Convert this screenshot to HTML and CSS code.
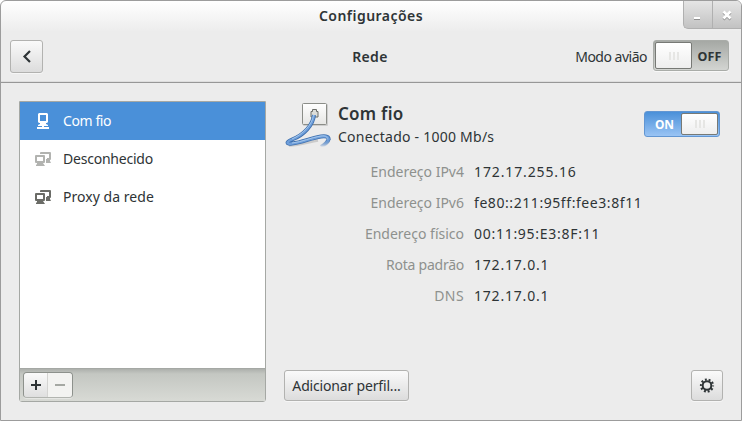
FILE: index.html
```html
<!DOCTYPE html>
<html lang="pt-BR">
<head>
<meta charset="utf-8">
<title>Configurações</title>
<link rel="stylesheet" href="styles.css">
</head>
<body>
<div class="window">
  <header class="titlebar">
    <h1 class="title">Configurações</h1>
    <div class="controls">
      <button class="control" aria-label="Minimizar"><svg width="28" height="27"><path d="M10 18h6" stroke="#8e8e8e" stroke-width="2"/><path d="M10 17h6" stroke="#fff" stroke-width="2"/></svg></button>
      <button class="control" aria-label="Fechar"><svg width="28" height="27"><path d="M10.500 11.500l7 7m0-7l-7 7" stroke="#8e8e8e" stroke-width="2.600"/><path d="M10.500 10.500l7 7m0-7l-7 7" stroke="#fff" stroke-width="2.600"/></svg></button>
    </div>
  </header>
  <div class="toolbar">
    <button class="button back" aria-label="Voltar"><svg width="31" height="31"><path d="M19 10l-5.500 5.500L19 21" fill="none" stroke="#2e3436" stroke-width="2.200"/></svg></button>
    <h2 class="page">Rede</h2>
    <div class="airplane"><span class="t-airplane">Modo avião</span>
      <div class="switch off"><i class="knob"><b></b><b></b><b></b></i><span class="state">OFF</span></div>
    </div>
  </div>
  <main class="content">
    <section class="sidebar">
      <ul class="devices">
        <li class="device selected"><svg width="16" height="16"><path fill="#fff" fill-rule="evenodd" d="M4 0h8l1 1v8l-1 1h-1v1l2 1v1H9v1h5v2H2v-2h5v-1H3v-1l2-1v-1H4L3 9V1zM5 2v6h6V2z"/></svg><span class="t-wired">Com fio</span></li>
        <li class="device"><svg width="17" height="16" class="dim"><use href="#proxy"/></svg><span class="t-unknown">Desconhecido</span></li>
        <li class="device"><svg width="17" height="16" class="dark"><g id="proxy"><path fill="none" stroke="currentColor" stroke-width="2" stroke-linejoin="round" d="M6 3V2h9v6h-3"/><path fill="currentColor" d="M11 8h4v2l1 2h-5z"/><path fill="none" stroke="currentColor" stroke-width="2" stroke-linejoin="round" d="M1 5h8v6H1z"/><path fill="currentColor" d="M2 11h6v1l2 3H1v-1l1-1z"/></g></svg><span class="t-proxy">Proxy da rede</span></li>
      </ul>
      <div class="actions">
        <div class="group">
          <button class="add" aria-label="Adicionar"><svg width="24" height="24"><path d="M7 12h10M12 7v10" stroke="#2e3436" stroke-width="2"/></svg></button>
          <button class="remove" aria-label="Remover"><svg width="24" height="24"><path d="M7 12h10" stroke="#a5a8a3" stroke-width="2"/></svg></button>
        </div>
      </div>
    </section>
    <section class="details">
      <div class="summary">
        <svg class="jack" width="48" height="48" viewBox="0 0 48 48">
          <defs>
            <linearGradient id="plate" x2="0" y2="1"><stop stop-color="#fff"/><stop offset="1" stop-color="#e6e6e4"/></linearGradient>
            <linearGradient id="edge" gradientUnits="userSpaceOnUse" x1="0" y1="39" x2="0" y2="46"><stop stop-color="#3f70ae"/><stop offset="1" stop-color="#3f70ae" stop-opacity="0"/></linearGradient>
            <linearGradient id="core" gradientUnits="userSpaceOnUse" x1="0" y1="39" x2="0" y2="46"><stop stop-color="#6f9fdb"/><stop offset="1" stop-color="#6f9fdb" stop-opacity="0"/></linearGradient>
          </defs>
          <rect x="19" y="3" width="25" height="22" rx="1" fill="#bbb" opacity=".6"/>
          <rect x="18.500" y="2.500" width="24" height="21" rx="1" fill="url(#plate)" stroke="#8b8d88"/>
          <path d="M27 16v-5.500h1.500v-2h4v2H34V16z" fill="#dcddd9" stroke="#6b6d69"/>
          <path d="M5 44.500c10 0 18-3 29-5" fill="none" stroke="#aaa" stroke-width="2.500" opacity=".5"/>
          <g fill="none" stroke-linejoin="round">
            <path d="M44.600 38C44.300 40.500 41 43.500 37 46" stroke="url(#edge)" stroke-width="4"/>
            <path d="M30 14C29 24 20 34 8 38.500C2 41 2 43.500 8 42.500C18 41.500 27 37 37 35.500C42.500 34.700 45 36 44.500 38.500" stroke="#3f70ae" stroke-width="4"/>
            <path d="M44.600 38C44.300 40.500 41 43.500 37 46" stroke="url(#core)" stroke-width="2.400"/>
            <path d="M30 14C29 24 20 34 8 38.500C2 41 2 43.500 8 42.500C18 41.500 27 37 37 35.500C42.500 34.700 45 36 44.500 38.600" stroke="#6f9fdb" stroke-width="2.400"/>
            <path d="M29.500 14C28 24 19 33 8 38M8 42C18 41 27 36.500 37 35C42 34.500 44 36 43 38.500" stroke="#b3d0ef" stroke-width=".8"/>
          </g>
        </svg>
        <div class="name"><h3 class="t-name">Com fio</h3><p class="t-status">Conectado - 1000 Mb/s</p></div>
        <div class="switch on"><span class="state">ON</span><i class="knob"><b></b><b></b><b></b></i></div>
      </div>
      <dl class="facts">
        <dt>Endereço IPv4</dt><dd class="v1">172.17.255.16</dd>
        <dt>Endereço IPv6</dt><dd class="v2">fe80::211:95ff:fee3:8f11</dd>
        <dt>Endereço físico</dt><dd class="v3">00:11:95:E3:8F:11</dd>
        <dt class="f4">Rota padrão</dt><dd class="v4">172.17.0.1</dd>
        <dt class="f5">DNS</dt><dd class="v4">172.17.0.1</dd>
      </dl>
      <footer class="footer">
        <button class="button profile"><span class="t-profile">Adicionar perfil...</span></button>
        <button class="button gear" aria-label="Opções"><svg width="30" height="29" viewBox="-15 -14.500 30 29"><circle r="4.300" fill="none" stroke="#2e3436" stroke-width="2"/><circle r="6" fill="none" stroke="#2e3436" stroke-width="2.200" stroke-dasharray="1.900 1.870" stroke-dashoffset=".95"/></svg></button>
      </footer>
    </section>
  </main>
</div>
</body>
</html>
```
FILE: styles.css
```css
* { box-sizing: border-box; }
body { margin: 0; background: #fff; font: 14px/20px "Noto Sans", "Open Sans", sans-serif; color: #2e3436; }
h1, h2, h3, p, ul, dl, dd { margin: 0; padding: 0; }
button { padding: 0; font: inherit; color: inherit; }
svg { display: block; flex: none; }
span, h1, h2, h3, p, dt, dd { white-space: nowrap; }
.window { width: 742px; height: 421px; border: 1px solid #9c9c9c; border-radius: 6px 6px 0 0; background: #ececec linear-gradient(#fff, #ececec) no-repeat 0 0 / 100% 31px; overflow: hidden; display: flex; flex-direction: column; }
.titlebar { height: 30px; display: grid; grid-template-columns: 1fr auto 1fr; }
.title, .page { grid-column: 2; font-size: 14px; font-weight: 600; line-height: 30px; }
.title { letter-spacing: .46px; }
.controls { grid-column: 3; justify-self: end; display: flex; height: 28px; border: 1px solid #b0b0b0; border-top: 0; border-right: 0; border-bottom-left-radius: 5px; background: linear-gradient(#e5e5e5, #c2c2c2); overflow: hidden; }
.control { width: 28px; border: 0; background: none; }
.control + .control { width: 29px; border-left: 1px solid #b0b0b0; }
.toolbar { height: 52px; border-bottom: 1px solid #979797; box-shadow: inset 0 -1px #dedede; display: grid; grid-template-columns: 1fr auto 1fr; align-items: start; padding: 9px 12px 0 9px; }
.button { border: 1px solid #b2b2b0; border-radius: 3px; background: linear-gradient(#fafafa, #dcdcdc); box-shadow: 0 1px #f6f6f6; }
.back { width: 33px; height: 33px; }
.page { line-height: 34px; letter-spacing: .3px; padding-left: 1px; }
.airplane { grid-column: 3; justify-self: end; display: flex; align-items: center; gap: 6px; }
.t-airplane { letter-spacing: -.5px; padding-top: 2px; }
.switch { display: flex; align-items: center; border: 1px solid #a9aca8; border-radius: 3px; width: 76px; padding: 1px; }
.off { height: 31px; background: linear-gradient(#a5a8a4, #d3d5d2); box-shadow: 0 1px #f8f8f8; }
.on { height: 26px; border-color: #6296d2; background: linear-gradient(#4a90d9, #9ac4f4); }
.knob { width: 37px; height: 27px; border: 1px solid #777975; border-radius: 2px; background: linear-gradient(#fff, #eee); display: flex; justify-content: center; align-items: center; gap: 2px; }
.on .knob { height: 22px; width: 37px; }
.knob b { width: 2px; height: 8px; background: #e6e6e4; }
.state { flex: 1; text-align: center; font-weight: 700; font-size: 12.5px; padding-top: 2px; }
.off .state { letter-spacing: .2px; }
.on .state { color: #fff; padding: 1px 0 0 2px; font-size: 12px; }
.content { flex: 1; display: flex; gap: 18px; padding: 18px; }
.sidebar { width: 247px; height: 301px; border: 1px solid #a5a8a4; border-radius: 0 0 3px 3px; background: #fff; display: flex; flex-direction: column; }
.devices { flex: 1; list-style: none; }
.device { height: 38px; display: flex; align-items: center; padding-left: 15px; }
.device svg { margin-right: 11px; }
.selected svg { margin-right: 12px; }
.selected { background: #4a90d9; color: #fff; }
.t-wired { letter-spacing: -.4px; }
.t-unknown { letter-spacing: -.22px; }
.t-proxy { letter-spacing: .04px; }
.dim { color: #b2b3b0; }
.dark { color: #6b6c67; }
.actions { height: 33px; border-top: 1px solid #a5a8a4; background: linear-gradient(#adb0ac, #c4c7c2 5px, #d8dad5); padding: 3px; }
.group { width: 50px; height: 26px; display: flex; border: 1px solid #8d918c; border-bottom-color: #b2b5b0; border-radius: 4px; overflow: hidden; box-shadow: 0 1px #e6e7e4; }
.group button { width: 24px; border: 0; background: #f3f3f1; }
.group .add { width: 24px; border-right: 1px solid #d4d4d2; background: linear-gradient(#fafafa, #dfdfdf); }
.details { flex: 1; display: flex; flex-direction: column; }
.summary { display: flex; height: 48px; }
.name { flex: 1; padding: 2px 0 0 6px; }
.t-name { font-size: 17px; font-weight: 600; line-height: 22px; letter-spacing: .25px; }
.t-status { line-height: 22px; margin-top: 1px; letter-spacing: .24px; }
.summary .switch { margin: 10px 3px 0 0; }
.facts { display: grid; grid-template-columns: 180px auto; column-gap: 10px; grid-auto-rows: 31px; line-height: 31px; margin-top: 7px; }
.facts dt { justify-self: end; color: #8e918e; }
.v1 { letter-spacing: .87px; }
.v2 { letter-spacing: .57px; }
.v3 { letter-spacing: .72px; }
.v4 { letter-spacing: .8px; }
.f4 { letter-spacing: -.25px; }
.f5 { letter-spacing: .4px; }
.footer { margin-top: auto; height: 32px; display: flex; justify-content: space-between; }
.profile { width: 125px; height: 31px; }
.t-profile { letter-spacing: -.17px; }
.gear { width: 32px; height: 31px; }
```
